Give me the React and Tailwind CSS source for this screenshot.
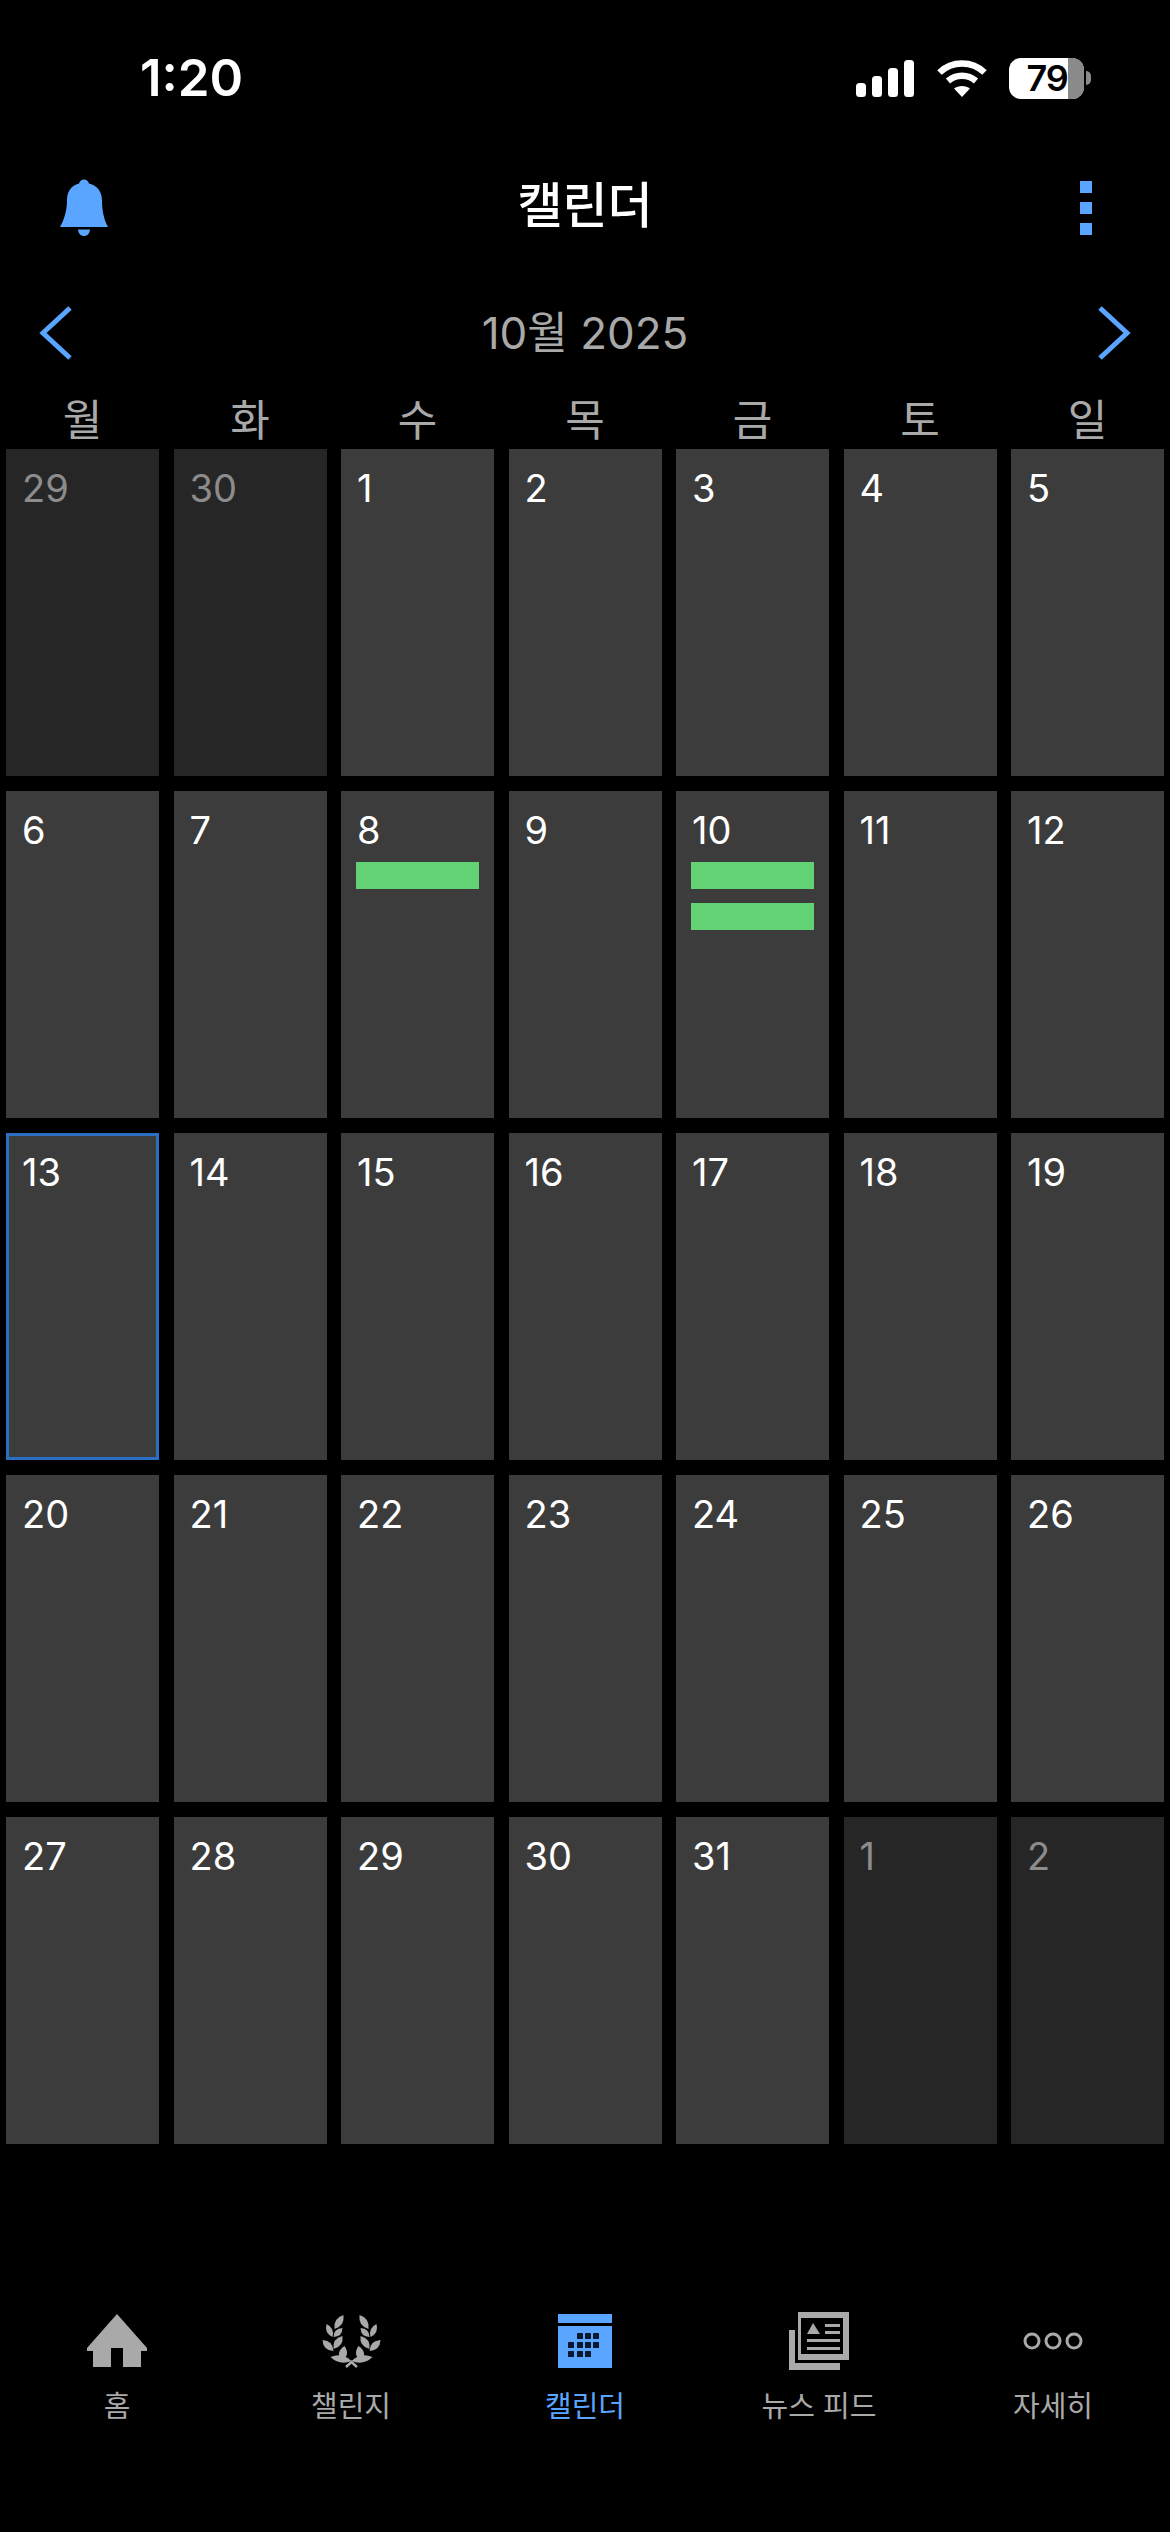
const FONT = "font-['Inter','Noto_Sans_CJK_KR',sans-serif]";

const weekdays = ["월", "화", "수", "목", "금", "토", "일"];

const days = [
  { n: 29, dim: true }, { n: 30, dim: true }, { n: 1 }, { n: 2 }, { n: 3 }, { n: 4 }, { n: 5 },
  { n: 6 }, { n: 7 }, { n: 8, events: 1 }, { n: 9 }, { n: 10, events: 2 }, { n: 11 }, { n: 12 },
  { n: 13, today: true }, { n: 14 }, { n: 15 }, { n: 16 }, { n: 17 }, { n: 18 }, { n: 19 },
  { n: 20 }, { n: 21 }, { n: 22 }, { n: 23 }, { n: 24 }, { n: 25 }, { n: 26 },
  { n: 27 }, { n: 28 }, { n: 29 }, { n: 30 }, { n: 31 }, { n: 1, dim: true }, { n: 2, dim: true },
];

const SignalIcon = () => (
  <svg width="59" height="37" viewBox="0 0 59 37" fill="#fff">
    <rect x="0" y="23" width="10" height="14" rx="3.5" />
    <rect x="16" y="16" width="10" height="21" rx="3.5" />
    <rect x="32" y="8" width="10" height="29" rx="3.5" />
    <rect x="48" y="0" width="10" height="37" rx="3.5" />
  </svg>
);

const WifiIcon = () => (
  <svg width="50" height="37" viewBox="0 0 50 37" fill="none" stroke="#fff" strokeWidth="6.5">
    <path d="M2.5 12.5 C15 0.5 35 0.5 47.5 12.5" />
    <path d="M11 21 C19 14 31 14 39 21" />
    <path d="M25 37 L17 28.5 C21 25 29 25 33 28.5 Z" fill="#fff" stroke="none" />
  </svg>
);

const Battery = () => (
  <div className="flex items-center">
    <div className="flex h-[41px] w-[75px] overflow-hidden rounded-[12px] bg-white">
      <div className="flex w-[59px] items-center justify-end text-[36px] leading-none font-semibold tracking-tight text-black">79</div>
      <div className="flex-1 bg-[#8a8a8a]" />
    </div>
    <div className="ml-[2px] h-[14px] w-[5px] rounded-r-full bg-[#8a8a8a]" />
  </div>
);

const BellIcon = () => (
  <svg width="48" height="58" viewBox="0 0 48 58" fill="#5aa5ff">
    <circle cx="24" cy="5.5" r="5" />
    <path d="M24 4 C13 4 7 11 7 21 C7 32 4 41 0 48 L48 48 C44 41 42 32 42 21 C42 11 35 4 24 4 Z" />
    <path d="M18 50.5 L30 50.5 C29.5 55 27 57 24 57 C21 57 18.5 55 18 50.5 Z" />
  </svg>
);

const HomeIcon = () => (
  <svg width="60" height="54" viewBox="0 0 60 54" fill="#a9a9a9">
    <path fillRule="evenodd" d="M30 0 L60 34 L60 37 L54 37 L54 53 L36 53 L36 34 L24 34 L24 53 L6 53 L6 37 L0 37 L0 34 Z" />
  </svg>
);

const leaves = [
  [22, 1, 13, 15, 7],
  [5, 10, 11, 23, 6],
  [21, 14, 12, 23, 6],
  [1, 26, 12, 37, 7],
  [21, 22, 12, 35, 7],
  [23, 32, 20, 47, 8],
  [9, 43, 30, 47, 7],
];

const leafPath = ([tx, ty, bx, by, w]) => {
  const mx = (tx + bx) / 2;
  const my = (ty + by) / 2;
  const dx = by - ty;
  const dy = tx - bx;
  const len = Math.hypot(dx, dy);
  const ox = (dx / len) * w;
  const oy = (dy / len) * w;
  return `M${bx} ${by} Q${mx + ox} ${my + oy} ${tx} ${ty} Q${mx - ox} ${my - oy} ${bx} ${by} Z`;
};

const LaurelIcon = () => (
  <svg width="61" height="54" viewBox="0 0 60 54" fill="#a9a9a9">
    {[false, true].map((flip) => (
      <g key={String(flip)} transform={flip ? "translate(60 0) scale(-1 1)" : undefined}>
        {leaves.map((leaf, i) => (
          <path key={i} d={leafPath(leaf)} />
        ))}
      </g>
    ))}
    <path d="M24.5 53 L30 48 L35.5 53" fill="none" stroke="#a9a9a9" strokeWidth="2.5" />
  </svg>
);

const CalendarIcon = () => (
  <svg width="54" height="54" viewBox="0 0 54 54" fill="#5aa5ff">
    <rect x="0" y="0" width="54" height="9" />
    <rect x="0" y="12" width="54" height="42" />
    <g fill="#0a1830">
      {[19, 27, 35, 10, 19, 27, 35, 10, 19, 27].map((x, i) => (
        <rect key={i} x={x} y={i < 3 ? 19 : i < 7 ? 28 : 37} width="6" height="6" rx="0.5" />
      ))}
    </g>
  </svg>
);

const NewsIcon = () => (
  <svg width="60" height="58" viewBox="0 0 60 58" fill="#a9a9a9">
    <path d="M0 18 L6 18 L6 51 L51 51 L51 58 L0 58 Z" />
    <path fillRule="evenodd" d="M9 0 L60 0 L60 48 L9 48 Z M12 6 L12 42 L54 42 L54 6 Z" />
    <path d="M24 11 L31 22 L18 22 Z" />
    <rect x="36" y="12" width="15" height="3" />
    <rect x="36" y="19" width="15" height="3" />
    <rect x="18" y="27" width="33" height="3" />
    <rect x="18" y="35" width="33" height="3" />
  </svg>
);

const MoreIcon = () => (
  <svg width="60" height="18" viewBox="0 0 60 18" fill="none" stroke="#a9a9a9" strokeWidth="3">
    <circle cx="9" cy="9" r="7" />
    <circle cx="30" cy="9" r="7" />
    <circle cx="51" cy="9" r="7" />
  </svg>
);

const tabs = [
  { label: "홈", icon: <HomeIcon /> },
  { label: "챌린지", icon: <LaurelIcon /> },
  { label: "캘린더", icon: <CalendarIcon />, active: true },
  { label: "뉴스 피드", icon: <NewsIcon /> },
  { label: "자세히", icon: <MoreIcon /> },
];

const DayCell = ({ day }) => (
  <div
    className={`flex h-[327px] flex-col gap-[14px] ${day.dim ? "bg-[#262626]" : "bg-[#3c3c3c]"} ${
      day.today ? "border-[3px] border-[#2a6fc4] px-[12px] pt-[13px]" : "px-[15px] pt-[16px]"
    }`}
  >
    <span className={`ml-[1px] h-[41px] text-[38px] leading-[46px] ${day.dim ? "text-[#8c8c8c]" : "text-white"}`}>{day.n}</span>
    {day.events > 0 &&
      Array.from({ length: day.events }).map((_, i) => <div key={i} className="h-[27px] bg-[#63d275]" />)}
  </div>
);

export default function App() {
  return (
    <div className={`min-h-screen w-[1170px] bg-black ${FONT}`}>
      <div className="flex h-[156px] items-center justify-between pr-[79px] pl-[140px]">
        <span className="text-[51px] font-semibold text-white">1:20</span>
        <div className="flex items-center gap-[22px]">
          <SignalIcon />
          <WifiIcon />
          <Battery />
        </div>
      </div>

      <div className="grid h-[104px] grid-cols-[1fr_auto_1fr] items-center px-[60px]">
        <BellIcon />
        <h1 className="mb-[4px] text-[49px] font-medium text-white">캘린더</h1>
        <div className="flex flex-col items-end gap-[9px] pr-[18px]">
          <div className="size-[12px] bg-[#5aa5ff]" />
          <div className="size-[12px] bg-[#5aa5ff]" />
          <div className="size-[12px] bg-[#5aa5ff]" />
        </div>
      </div>

      <div className="flex h-[140px] items-center justify-between px-[38px] pt-[6px]">
        <svg width="34" height="54" viewBox="0 0 34 54" fill="none" stroke="#5aa5ff" strokeWidth="5">
          <path d="M32 2 L5 27 L32 52" />
        </svg>
        <span className="text-[44px] text-[#a9a9a9]">10월 2025</span>
        <svg width="34" height="54" viewBox="0 0 34 54" fill="none" stroke="#5aa5ff" strokeWidth="5">
          <path d="M2 2 L29 27 L2 52" />
        </svg>
      </div>

      <div className="grid h-[49px] grid-cols-7 gap-x-[14.5px] px-[6px]">
        {weekdays.map((d) => (
          <span key={d} className="text-center text-[43px] leading-[40px] font-normal text-[#a9a9a9]">
            {d}
          </span>
        ))}
      </div>

      <div className="grid grid-cols-7 gap-x-[14.5px] gap-y-[15px] px-[6px]">
        {days.map((day, i) => (
          <DayCell key={i} day={day} />
        ))}
      </div>

      <nav className="mt-[167px] grid grid-cols-5">
        {tabs.map((tab) => (
          <div key={tab.label} className="flex flex-col items-center">
            <div className="flex h-[60px] items-center justify-center">{tab.icon}</div>
            <span className={`mt-[18px] text-[29px] leading-[36px] ${tab.active ? "text-[#5aa5ff]" : "text-[#a9a9a9]"}`}>
              {tab.label}
            </span>
          </div>
        ))}
      </nav>
    </div>
  );
}
